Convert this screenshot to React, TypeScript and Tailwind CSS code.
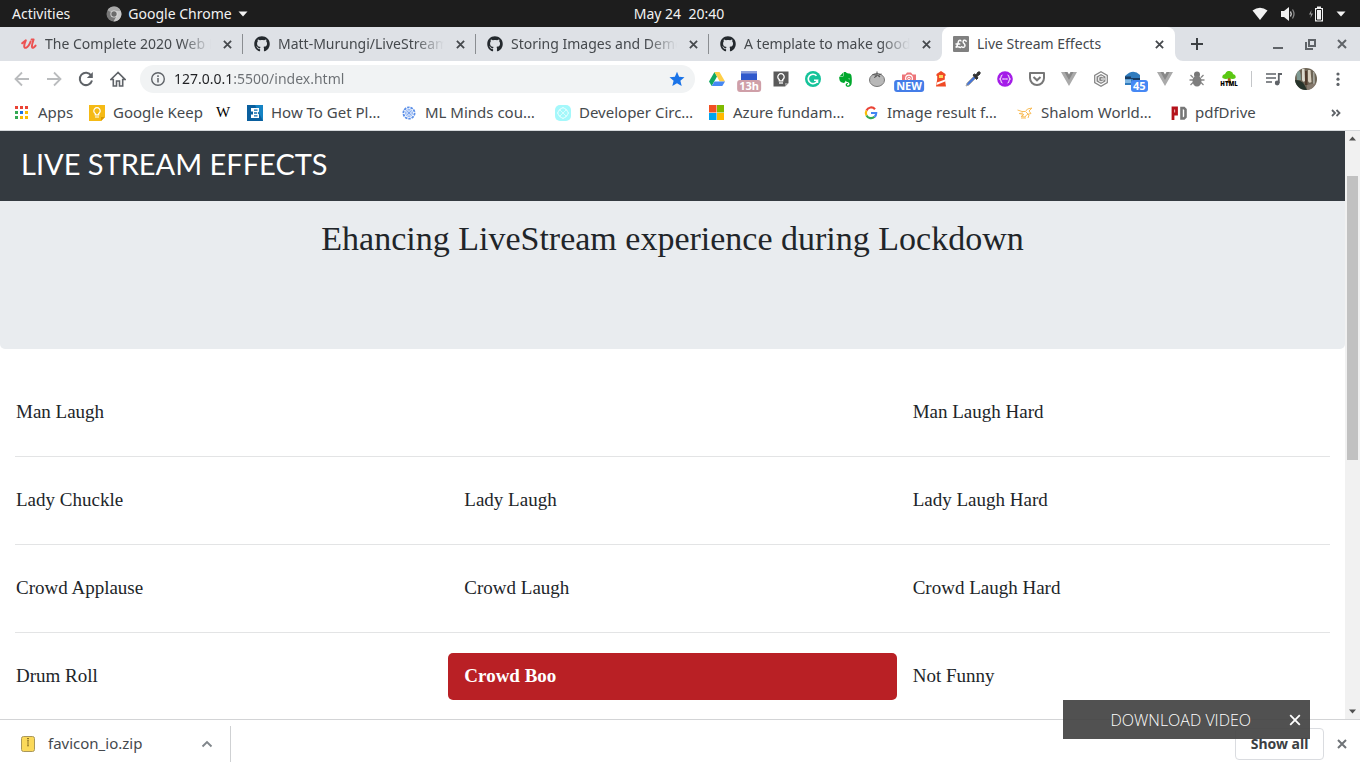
import type { ReactNode } from 'react';
import { FaGithub, FaEvernote } from 'react-icons/fa';

const ui = "font-['Noto_Sans','Open_Sans',sans-serif]";

function Icon({ size = 16, box = 16, children }: { size?: number; box?: number; children: ReactNode }) {
  return (
    <svg width={size} height={size} viewBox={`0 0 ${box} ${box}`} fill="none" aria-hidden="true" className="shrink-0">
      {children}
    </svg>
  );
}

function Cross({ size = 10, width = 2 }: { size?: number; width?: number }) {
  return (
    <Icon size={size} box={10}>
      <path d="M1 1L9 9M9 1L1 9" stroke="currentColor" strokeWidth={width} />
    </Icon>
  );
}

function SystemBar() {
  return (
    <header className="grid h-[27px] shrink-0 grid-cols-3 items-center bg-[#1d1d1d] pl-3 pr-3.5 text-sm text-[#f2f2f2]">
      <div className="flex items-center gap-9">
        <button type="button">Activities</button>
        <button type="button" className="flex items-center gap-1.5">
          <Icon>
            <circle cx="8" cy="8" r="7.5" fill="#777" />
            <path d="M8 8L1.5 4.3A7.5 7.5 0 0 1 14.8 5H8z" fill="#a9a9a9" />
            <path d="M14.8 5A7.5 7.5 0 0 1 7.5 15.5L10.8 9.5L10 5z" fill="#c9c9c9" />
            <circle cx="8" cy="8" r="3.6" fill="#ddd" />
            <circle cx="8" cy="8" r="2.7" fill="#6b6b6b" />
          </Icon>
          Google Chrome
          <Icon size={10} box={10}><path d="M0.5 2.5H9.5L5 7.5z" fill="#f2f2f2" /></Icon>
        </button>
      </div>
      <time className="whitespace-pre text-center">May 24  20:40</time>
      <button type="button" aria-label="System menu" className="flex items-center gap-3 justify-self-end">
        <Icon><path d="M0.5 4.5Q8 -1 15.5 4.5L8 14z" fill="#f2f2f2" /></Icon>
        <Icon>
          <path d="M1 5H4L9 1V15L4 11H1z" fill="#f2f2f2" />
          <path d="M10.5 5.5Q12 8 10.5 10.5" stroke="#ddd" strokeWidth="1.3" />
          <path d="M12.5 3.5Q15.5 8 12.5 12.5" stroke="#888" strokeWidth="1.3" />
        </Icon>
        <Icon>
          <path d="M3.5 4L1 8.5H3L2.5 12L5 7.5H3z" fill="#999" />
          <path d="M9 0.5H13V2H15V15.5H7V2H9z" fill="#f2f2f2" />
          <path d="M8.5 3.5H13.5V14H8.5z" stroke="#1d1d1d" />
        </Icon>
        <Icon size={10} box={10}><path d="M0.5 2.5H9.5L5 7.5z" fill="#f2f2f2" /></Icon>
      </button>
    </header>
  );
}

const github = <FaGithub size={16} className="shrink-0 text-[#24292e]" />;

const tabs = [
  {
    title: 'The Complete 2020 Web Developer',
    icon: (
      <Icon>
        <path d="M1.2 7.2Q3 5.500 4.800 4.300Q3.200 8 3.200 10.300Q3.300 12.200 5 11.800Q7.800 10.800 9.600 5.500" stroke="#ec5252" strokeWidth="2" strokeLinecap="round" strokeLinejoin="round" />
        <path d="M10.600 3.500H12.600Q11 8 10.900 10.300Q11 12.300 12.500 11.600Q13.600 11 14.600 9.600" stroke="#ec5252" strokeWidth="2" strokeLinecap="round" strokeLinejoin="round" />
      </Icon>
    ),
  },
  { title: 'Matt-Murungi/LiveStreamEffects', icon: github },
  { title: 'Storing Images and Demos in GitHub', icon: github },
  { title: 'A template to make good README', icon: github },
];

function TabStrip() {
  return (
    <div className="flex h-[34px] shrink-0 bg-[#dee1e6] pl-[10px] text-sm text-[#45494d]">
      <nav aria-label="Tabs" className="flex min-w-0 flex-1">
        {tabs.map((tab, i) => (
          <div key={tab.title} className="flex min-w-0 max-w-[233px] flex-1 items-center">
            <div className="flex min-w-0 flex-1 items-center gap-2 pl-[11px] pr-[7px]">
              {tab.icon}
              <span className="min-w-0 flex-1 overflow-hidden whitespace-nowrap [mask-image:linear-gradient(to_right,#000_82%,transparent)]">
                {tab.title}
              </span>
              <button type="button" aria-label={`Close ${tab.title}`} className="grid size-4 place-items-center">
                <Cross size={9} />
              </button>
            </div>
            <span className={i < 3 ? 'h-5 w-px bg-[#8a8d91]' : 'h-5 w-px'} />
          </div>
        ))}
        <div className="relative flex max-w-[233px] flex-1 items-center gap-2 rounded-t-lg bg-white pl-[11px] pr-2">
          <svg className="absolute -left-2 bottom-0 text-white" width="8" height="8" aria-hidden="true"><path d="M8 0V8H0A8 8 0 0 0 8 0z" fill="currentColor" /></svg>
          <svg className="absolute -right-2 bottom-0 text-white" width="8" height="8" aria-hidden="true"><path d="M0 0V8H8A8 8 0 0 1 0 0z" fill="currentColor" /></svg>
          <Icon>
            <rect width="16" height="16" rx="1" fill="#808080" />
            <path d="M8 5Q7.200 3.500 6 4.500Q5.200 5.500 4.800 8Q4.300 10.500 2.600 11.300Q4.500 10 7.500 11.500M3 8H6.800M13.200 5.300Q12.800 3.800 11.200 4.200Q9.600 5 10.300 6.700Q12.600 8.500 11.800 10.300Q10.400 12.300 8.600 10.800" stroke="#fff" strokeWidth="1.400" strokeLinecap="round" />
          </Icon>
          <span className="min-w-0 flex-1 truncate">Live Stream Effects</span>
          <button type="button" aria-label="Close Live Stream Effects" className="grid size-4 place-items-center">
            <Cross size={9} />
          </button>
        </div>
        <button type="button" aria-label="New tab" className="ml-3.5 grid w-4 place-items-center">
          <Icon size={12} box={12}><path d="M6 0V12M0 6H12" stroke="#3c4043" strokeWidth="2" /></Icon>
        </button>
      </nav>
      <div className="flex items-center gap-4 pr-[10px] text-[#5f6368]">
        <button type="button" aria-label="Minimize" className="grid size-4 place-items-center">
          <Icon size={10} box={10}><path d="M0 9H10" stroke="currentColor" strokeWidth="2" /></Icon>
        </button>
        <button type="button" aria-label="Restore" className="grid size-4 place-items-center">
          <Icon size={11} box={11}><path d="M4 1H10V7H4zM1 3V10H8" stroke="currentColor" strokeWidth="2" /></Icon>
        </button>
        <button type="button" aria-label="Close window" className="grid size-4 place-items-center"><Cross /></button>
      </div>
    </div>
  );
}

const badge = 'absolute left-1/2 top-[9px] -translate-x-1/2 rounded-[3px] px-0.5 text-[11px] leading-3 font-bold text-white';

const vue = (
  <Icon>
    <path d="M0 1H5L8 6L11 1H16L8 15z" fill="#aaa" />
    <path d="M3.500 1H6.500L8 3.500L9.500 1H12.500L8 9z" fill="#888" />
  </Icon>
);

const extensions: { name: string; icon: ReactNode }[] = [
  {
    name: 'Google Drive',
    icon: (
      <Icon>
        <path d="M5.500 1L0 10.500L2.700 15L8 5.500z" fill="#11a861" />
        <path d="M5.500 1H10.500L16 10.500H10.700z" fill="#ffcf48" />
        <path d="M5.500 10.500H16L13.300 15H2.700z" fill="#4688f4" />
      </Icon>
    ),
  },
  {
    name: 'Screen time',
    icon: (
      <span className="relative h-4 w-4">
        <Icon><path d="M0 0H16V3H0z" fill="#8c9fdc" /><path d="M0 2.500H16V10H0z" fill="#3059cc" /></Icon>
        <span className={`${badge} bg-[#cf9fa8]`}>13h</span>
      </span>
    ),
  },
  {
    name: 'Google Keep',
    icon: (
      <Icon>
        <path d="M0.500 0.500H15.500V12L12 15.500H0.500z" fill="#5a5a5a" />
        <path d="M6.300 9.800V8.600A3.200 3.200 0 1 1 9.700 8.600V9.800z" stroke="#fff" strokeWidth="1.300" />
        <path d="M6 12H10" stroke="#fff" strokeWidth="1.300" />
        <path d="M12 12H15.500L12 15.500z" fill="#999" />
      </Icon>
    ),
  },
  {
    name: 'Grammarly',
    icon: (
      <Icon>
        <circle cx="8" cy="8" r="8" fill="#15c39a" />
        <path d="M11.500 4.800A4.700 4.700 0 1 0 12.500 9.300H9M12.500 8.500V12" stroke="#fff" strokeWidth="1.600" />
      </Icon>
    ),
  },
  { name: 'Evernote', icon: <FaEvernote size={17} className="text-[#00a82d]" /> },
  {
    name: 'Tomato timer',
    icon: (
      <Icon>
        <ellipse cx="8" cy="9" rx="7.500" ry="6.500" fill="#b8b8b8" stroke="#777" />
        <path d="M8 0.500V4M3.500 3.500L7.500 4L5.500 6.500L8.500 4.500L11 6L9.500 4L12.500 3" stroke="#555" />
      </Icon>
    ),
  },
  {
    name: 'Screenshot',
    icon: (
      <span className="relative h-4 w-4">
        <Icon>
          <path d="M1 3.500H4.500L6 1.500H10L11.500 3.500H15V12H1z" fill="#ed7579" />
          <circle cx="8" cy="7.500" r="3.400" stroke="#fff" strokeWidth="1.200" />
          <circle cx="8" cy="7.500" r="1.300" stroke="#fff" />
        </Icon>
        <span className={`${badge} bg-[#447de8]`}>NEW</span>
      </span>
    ),
  },
  {
    name: 'Lighthouse',
    icon: (
      <Icon>
        <path d="M3.500 5V3L8 0L12.500 3V5H11.800V8L13 15.500H3L4.200 8V5z" fill="#f04a25" />
        <path d="M6 4H10V7H6z" fill="#ffd75e" />
        <path d="M4 11.500L12 8.500V10.500L3.500 14z" fill="#fff" />
      </Icon>
    ),
  },
  {
    name: 'Color picker',
    icon: (
      <Icon>
        <path d="M1 15L2 12L9 5L11 7L4 14z" fill="#4876d5" stroke="#aaa" />
        <path d="M8 4L9.500 3L11 4L13 1Q16 0 15 3L12 5.500L13 7L11.500 8.500z" fill="#333" stroke="#333" />
      </Icon>
    ),
  },
  {
    name: 'JSON viewer',
    icon: (
      <Icon>
        <circle cx="8" cy="8" r="7.800" fill="#a41ce8" />
        <path d="M5.500 4Q4 4 4 6Q4 8 2.500 8Q4 8 4 10Q4 12 5.500 12M10.500 4Q12 4 12 6Q12 8 13.500 8Q12 8 12 10Q12 12 10.500 12" stroke="#fff" />
        <path d="M5.500 8H10.500" stroke="#fff" strokeWidth="1.400" strokeDasharray="1.200 0.700" />
      </Icon>
    ),
  },
  {
    name: 'Pocket',
    icon: (
      <Icon>
        <path d="M1 2H15V7A7 7 0 0 1 1 7z" stroke="#777" strokeWidth="2" strokeLinejoin="round" />
        <path d="M4.500 6L8 9.300L11.500 6" stroke="#777" strokeWidth="2" />
      </Icon>
    ),
  },
  { name: 'Vue devtools', icon: vue },
  {
    name: 'Cube',
    icon: (
      <Icon>
        <path d="M8 0.800L14.300 4.400V11.600L8 15.200L1.700 11.600V4.400z" stroke="#888" strokeWidth="1.300" />
        <path d="M8 3L12.500 5.500V10.500L8 13L3.500 10.500V5.500z" fill="#8a8a8a" />
        <path d="M10.500 6.200L8 5L5.700 6.300V9.700L8 11L10.500 9.700M8 8H12" stroke="#fff" />
      </Icon>
    ),
  },
  {
    name: 'Traffic',
    icon: (
      <span className="relative h-4 w-4">
        <Icon>
          <path d="M0 5Q8 -3 15 4V14H0z" fill="#2f7bbd" />
          <path d="M0 5.500H6V7H15V13H8V8H0z" fill="#183c63" />
          <path d="M0 8.500H6V12H0z" fill="#7fb6e2" />
        </Icon>
        <span className="absolute left-1.5 top-[9px] rounded-[3px] bg-[#4688f4] px-0.5 text-[11px] leading-3 font-bold text-white">45</span>
      </span>
    ),
  },
  { name: 'Vue detector', icon: vue },
  {
    name: 'Bug reporter',
    icon: (
      <Icon>
        <path d="M1.500 4L4 6.500M14.500 4L12 6.500M0.500 9H15.500M1.500 14L4 11.500M14.500 14L12 11.500" stroke="#888" strokeWidth="1.300" />
        <circle cx="8" cy="3.500" r="3" fill="#777" />
        <ellipse cx="8" cy="10" rx="4.500" ry="5.500" fill="#7e7e7e" />
      </Icon>
    ),
  },
  {
    name: 'HTML tree',
    icon: (
      <span className="relative h-4 w-4">
        <Icon>
          <path d="M7 6H9.500L10 12H6.500z" fill="#a4651e" />
          <path d="M1.500 7Q0.500 4 4 3Q6 -1.500 10 0.500Q12 1 12 3Q15.500 4 14.500 7Q12 9 8 7Q5 9 1.500 7z" fill="#5bc813" />
        </Icon>
        <span className="absolute left-1/2 top-2.5 -translate-x-1/2 text-[6px] leading-[6px] font-black text-black">HTML</span>
      </span>
    ),
  },
];

function Toolbar() {
  const nav = 'grid h-7 w-8 place-items-center';
  return (
    <div className="flex h-9 shrink-0 items-center bg-white px-1.5 text-[#5f6368]">
      <button type="button" aria-label="Back" className={`${nav} text-[#babcbe]`}>
        <Icon><path d="M15 8H2M8 1.500L1.500 8L8 14.500" stroke="currentColor" strokeWidth="1.800" /></Icon>
      </button>
      <button type="button" aria-label="Forward" className={`${nav} text-[#babcbe]`}>
        <Icon><path d="M1 8H14M8 1.500L14.500 8L8 14.500" stroke="currentColor" strokeWidth="1.800" /></Icon>
      </button>
      <button type="button" aria-label="Reload" className={nav}>
        <Icon>
          <path d="M13.200 4.500A6.200 6.200 0 1 0 14 9.500" stroke="currentColor" strokeWidth="2" />
          <path d="M14.800 1V7H8.800z" fill="currentColor" />
        </Icon>
      </button>
      <button type="button" aria-label="Home" className={nav}>
        <Icon><path d="M8 1.500L1 8.500H3.300V15H6.500V10H9.500V15H12.700V8.500H15z" stroke="currentColor" strokeWidth="1.600" /></Icon>
      </button>
      <div className="mx-1.5 flex h-7 min-w-0 flex-1 items-center gap-2 rounded-full bg-[#f1f3f4] pl-2.5 pr-2.5">
        <Icon>
          <circle cx="8" cy="8" r="6.300" stroke="currentColor" strokeWidth="1.400" />
          <path d="M8 7V11.500M8 4.300V5.900" stroke="currentColor" strokeWidth="1.500" />
        </Icon>
        <input
          type="text"
          aria-label="Address"
          defaultValue="127.0.0.1:5500/index.html"
          className="min-w-0 flex-1 bg-[linear-gradient(to_right,#202124_59px,#6b6f73_59px)] bg-clip-text text-sm text-transparent caret-black outline-none"
        />
        <button type="button" aria-label="Bookmark this page">
          <Icon><path d="M8 0.800L10.100 5.800L15.500 6.200L11.400 9.800L12.700 15L8 12.200L3.300 15L4.600 9.800L0.500 6.200L5.900 5.800z" fill="#1a73e8" /></Icon>
        </button>
      </div>
      {extensions.map((ext) => (
        <button key={ext.name} type="button" aria-label={ext.name} className={nav}>{ext.icon}</button>
      ))}
      <span className="mx-1.5 h-4 w-px bg-[#c4c6c9]" />
      <button type="button" aria-label="Media controls" className={nav}>
        <Icon>
          <path d="M0 3H10M0 7H10M0 11H6" stroke="currentColor" strokeWidth="1.600" />
          <path d="M12.800 12V3H16" stroke="currentColor" strokeWidth="1.800" />
          <circle cx="11.200" cy="12" r="2.400" fill="currentColor" />
        </Icon>
      </button>
      <button type="button" aria-label="Profile" className={nav}>
        <svg width="22" height="22" viewBox="0 0 22 22" aria-hidden="true">
          <clipPath id="avatar"><circle cx="11" cy="11" r="11" /></clipPath>
          <g clipPath="url(#avatar)">
            <path d="M0 0H22V22H0z" fill="#6d6455" />
            <path d="M1 1Q6 0 6 12H2z" fill="#7f9a93" />
            <path d="M7 1H9.500L10 13Q8 15 7 12z" fill="#dcd9cd" />
            <path d="M10 3H12L12.500 17H10z" fill="#513b2c" />
            <path d="M13 2H15.500L16.500 14Q14 16 13 13z" fill="#d8cfbe" />
            <path d="M18 4H19.500L20 17H18z" fill="#a5a59c" />
            <path d="M0 12Q6 12 9 16L12 22H0z" fill="#26332a" />
            <path d="M12 17L22 15V22H12z" fill="#85796d" />
          </g>
        </svg>
      </button>
      <button type="button" aria-label="Chrome menu" className={nav}>
        <Icon><circle cx="8" cy="3" r="1.600" fill="currentColor" /><circle cx="8" cy="8.200" r="1.600" fill="currentColor" /><circle cx="8" cy="13.400" r="1.600" fill="currentColor" /></Icon>
      </button>
    </div>
  );
}

const wide = 'w-[154px]';

const bookmarks: { label: string; width: string; icon: ReactNode }[] = [
  {
    label: 'Apps',
    width: 'w-[75px]',
    icon: (
      <Icon>
        <path d="M1 1H4V4H1zM6 1H9V4H6zM11 1H14V4H11z" fill="#ea4335" />
        <path d="M1 6H4V9H1zM1 11H4V14H1z" fill="#34a853" />
        <path d="M6 6H9V9H6z" fill="#1a73e8" />
        <path d="M11 6H14V9H11zM6 11H9V14H6zM11 11H14V14H11z" fill="#fbbc04" />
      </Icon>
    ),
  },
  {
    label: 'Google Keep',
    width: 'w-[126px]',
    icon: (
      <Icon>
        <path d="M0 0H16V12L12 16H0z" fill="#f5ba15" />
        <path d="M6.300 9.800V8.600A3.200 3.200 0 1 1 9.700 8.600V9.800zM6 12H10" stroke="#fff" strokeWidth="1.200" />
        <path d="M12 12H16L12 16z" fill="#d99a00" />
      </Icon>
    ),
  },
  { label: '', width: 'w-8', icon: <span className="w-4 text-center font-['Liberation_Serif',serif] text-[15px] text-black">W</span> },
  {
    label: 'How To Get Pl…',
    width: wide,
    icon: (
      <Icon>
        <path d="M0 0H16V16H0z" fill="#0a5f9e" />
        <path d="M8 0H16V16z" fill="#1583c4" />
        <path d="M4 3H12V6.500L10.500 8L12 9.500V13H4V9.500H6V6.500H4z" fill="#fff" />
        <path d="M7 5.200H10.500M7 8H10M7 10.800H10.500" stroke="#0f6eb0" strokeWidth="1.300" />
      </Icon>
    ),
  },
  {
    label: 'ML Minds cou…',
    width: wide,
    icon: (
      <Icon>
        <circle cx="8" cy="8" r="5.600" stroke="#5b8fe8" strokeWidth="1.800" strokeDasharray="2.500 0.900" />
        <circle cx="8" cy="8" r="3.500" stroke="#8ab0f2" />
        <path d="M6 6L10 10M10 6L6 10M8 5V11M5 8H11" stroke="#6f9ded" strokeWidth="0.800" />
      </Icon>
    ),
  },
  {
    label: 'Developer Circ…',
    width: wide,
    icon: (
      <Icon>
        <rect width="16" height="16" rx="5" fill="#a4f8fb" />
        <path d="M8 2L14 8L8 14L2 8zM4 4L12 12M12 4L4 12" stroke="#d8fdfe" />
        <circle cx="8" cy="8" r="5" stroke="#d8fdfe" />
      </Icon>
    ),
  },
  {
    label: 'Azure fundam…',
    width: wide,
    icon: (
      <Icon>
        <path d="M0 0H7.500V7.500H0z" fill="#f25022" />
        <path d="M8 0H15V7.500H8z" fill="#7fba00" />
        <path d="M0 8H7.500V15H0z" fill="#00a4ef" />
        <path d="M8 8H15V15H8z" fill="#ffb900" />
      </Icon>
    ),
  },
  {
    label: 'Image result f…',
    width: wide,
    icon: (
      <Icon>
        <path d="M12 4.200A5.100 5.100 0 0 0 3.500 5.500" stroke="#ea4335" strokeWidth="2.200" />
        <path d="M3.500 5.500A5.100 5.100 0 0 0 3.500 10.500" stroke="#fbbc05" strokeWidth="2.200" />
        <path d="M3.500 10.500A5.100 5.100 0 0 0 11.500 11.800" stroke="#34a853" strokeWidth="2.200" />
        <path d="M11.500 11.800A5 5 0 0 0 13.200 8H8" stroke="#4285f4" strokeWidth="2.200" />
      </Icon>
    ),
  },
  {
    label: 'Shalom World…',
    width: wide,
    icon: (
      <Icon>
        <path d="M0.500 5L5 6.500H8.500L10.500 4L15 3L12 6L14 8.500L10 9.500L8 12L4 11.500L7 9.500L2 8.500L6 8M9 7L12 10L11 13M4 13H9" stroke="#f9bd59" />
      </Icon>
    ),
  },
  {
    label: 'pdfDrive',
    width: 'w-[100px]',
    icon: (
      <Icon>
        <path d="M2 15V3H5.500V9H2" stroke="#b5121b" strokeWidth="2.800" />
        <path d="M10.500 3H13L14.500 4.500V12L13 13.500H10.500z" stroke="#777" strokeWidth="2.600" />
      </Icon>
    ),
  },
];

function BookmarksBar() {
  return (
    <nav aria-label="Bookmarks" className="flex h-[34px] shrink-0 items-center border-b border-[#d5d8db] bg-white pl-3.5 pr-4 pb-0.5 text-[15px] text-[#45494d]">
      {bookmarks.map((b) => (
        <a key={b.label || 'Wikipedia'} href="#bookmark" aria-label={b.label || 'Wikipedia'} className={`flex min-w-0 items-center gap-2 whitespace-nowrap ${b.width}`}>
          {b.icon}
          {b.label}
        </a>
      ))}
      <button type="button" aria-label="More bookmarks" className="ml-auto">
        <Icon><path d="M4 5L7 8L4 11M8.500 5L11.500 8L8.500 11" stroke="#5f6368" strokeWidth="1.800" /></Icon>
      </button>
    </nav>
  );
}

const rows = [
  ['Man Laugh', '', 'Man Laugh Hard'],
  ['Lady Chuckle', 'Lady Laugh', 'Lady Laugh Hard'],
  ['Crowd Applause', 'Crowd Laugh', 'Crowd Laugh Hard'],
  ['Drum Roll', 'Crowd Boo', 'Not Funny'],
];

function EffectsPage() {
  return (
    <div className="min-w-0 flex-1 overflow-hidden bg-white font-['Liberation_Serif',serif] text-[#212529]">
      <div className="bg-[#343a40] px-[21px] pb-[17px] pt-3">
        <a href="#home" className="block font-['Lato',sans-serif] text-[29px] leading-[41px] text-white">LIVE STREAM EFFECTS</a>
      </div>
      <section className="rounded-b-[5px] bg-[#e9ecef] px-4 pb-[88px] pt-4">
        <h1 className="text-center text-[34px] leading-[44px]">Ehancing LiveStream experience during Lockdown</h1>
      </section>
      <main className="pt-10">
        {rows.map((row) => (
          <div key={row[0]}>
            <div className="grid h-[47px] grid-cols-3">
              {row.map((name, i) =>
                name ? (
                  <button
                    key={name}
                    type="button"
                    className={
                      name === 'Crowd Boo'
                        ? 'rounded-[5px] bg-[#b92025] px-4 text-left text-[19px] font-bold text-white'
                        : 'px-4 text-left text-[19px]'
                    }
                  >
                    {name}
                  </button>
                ) : (
                  <span key={i} />
                ),
              )}
            </div>
            <hr className="mx-[15px] my-5 border-[#e3e4e5]" />
          </div>
        ))}
      </main>
    </div>
  );
}

function Scrollbar() {
  return (
    <div className="flex w-[15px] shrink-0 flex-col bg-[#f1f1f1]">
      <button type="button" aria-label="Scroll up" className="grid h-[15px] place-items-center">
        <Icon size={7} box={7}><path d="M0 5.500H7L3.500 1.500z" fill="#505050" /></Icon>
      </button>
      <div className="flex flex-1 flex-col px-0.5">
        <div className="grow-[30]" />
        <div className="grow-[284] bg-[#c1c1c1]" />
        <div className="grow-[244]" />
      </div>
      <button type="button" aria-label="Scroll down" className="grid h-[15px] place-items-center">
        <Icon size={7} box={7}><path d="M0 1.500H7L3.500 5.500z" fill="#505050" /></Icon>
      </button>
    </div>
  );
}

function DownloadShelf() {
  return (
    <footer className="flex h-[49px] shrink-0 items-center border-t border-[#d3d4d6] bg-white pl-5 pr-3 text-sm text-[#45494d]">
      <div className="flex h-9 w-[211px] items-center border-r border-[#cfd1d3] pr-[15px]">
        <a href="#file" className="flex flex-1 items-center gap-3 text-[15px]">
          <Icon>
            <rect x="1.500" y="0.500" width="13" height="15" rx="2" fill="#fbd95a" stroke="#a9975a" />
            <path d="M8 2V11" stroke="#8d7325" strokeWidth="2" strokeDasharray="1.200 1" />
          </Icon>
          favicon_io.zip
        </a>
        <button type="button" aria-label="Download options" className="grid size-4 place-items-center">
          <Icon size={12} box={12}><path d="M1.500 8.500L6 4L10.500 8.500" stroke="#80868b" strokeWidth="1.900" /></Icon>
        </button>
      </div>
      <button type="button" className="ml-auto h-8 w-[89px] rounded border border-[#dadce0] font-bold text-[#3c4043]">Show all</button>
      <button type="button" aria-label="Close downloads" className="ml-3 grid w-3 place-items-center text-[#6f7377]"><Cross /></button>
    </footer>
  );
}

export default function App() {
  return (
    <div className={`relative flex h-screen flex-col overflow-hidden bg-white ${ui}`}>
      <SystemBar />
      <TabStrip />
      <Toolbar />
      <BookmarksBar />
      <div className="flex min-h-0 flex-1">
        <EffectsPage />
        <Scrollbar />
      </div>
      <DownloadShelf />
      <div className="absolute bottom-[29px] right-[50px] flex h-[39px] w-[247px] items-center justify-end gap-[38px] bg-[#444444]/93 pr-[9px] text-white">
        <button type="button" className="font-['Open_Sans',sans-serif] text-base font-light">DOWNLOAD VIDEO</button>
        <button type="button" aria-label="Dismiss" className="grid w-3 place-items-center"><Cross size={12} width={1.5} /></button>
      </div>
    </div>
  );
}
